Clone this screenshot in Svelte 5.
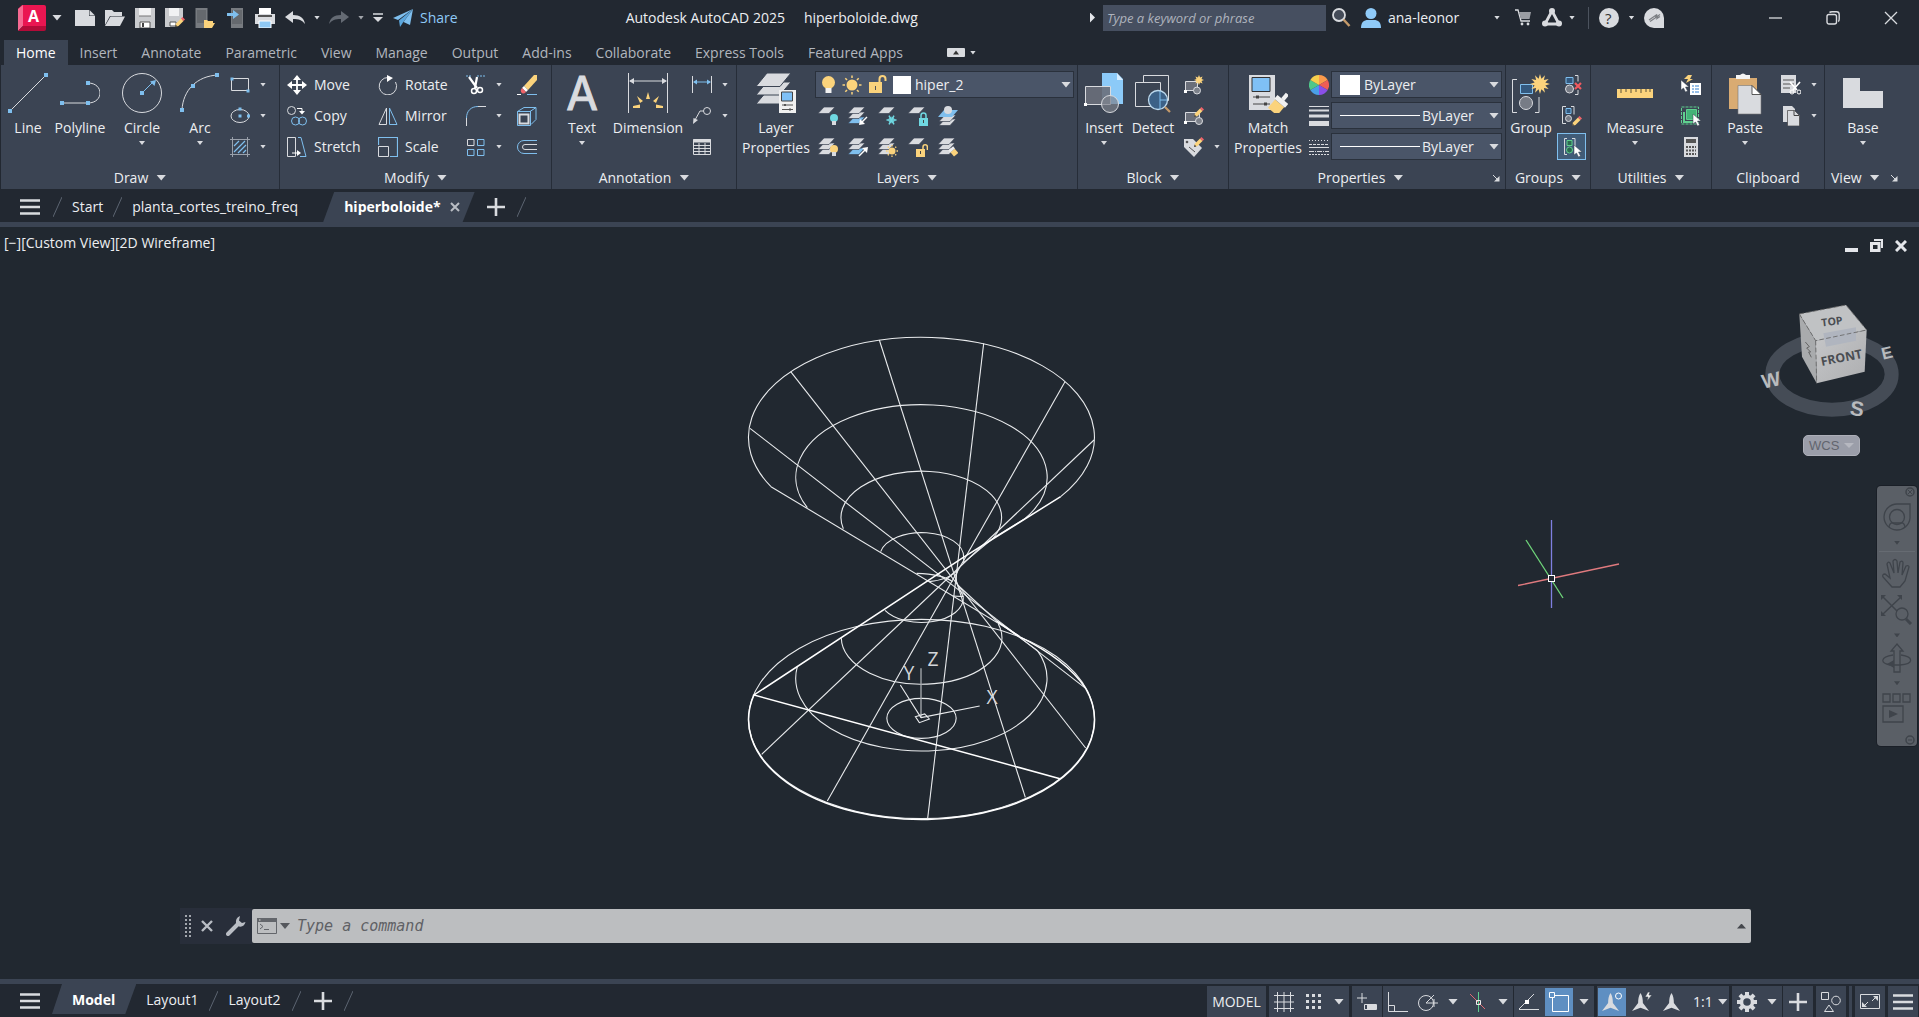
<script>
  const W = '#d9dbdf';
  const B = '#7fbfee';
  const Y = '#fbd37c';
  const S = '#3b4453';

  const svg = (w, h, body) =>
    `<svg width="${w}" height="${h}" viewBox="0 0 ${w} ${h}" fill="none" aria-hidden="true" style="display:block">${body}</svg>`;
  const dot = (x, y, s = 4) => `<rect x="${x - s / 2}" y="${y - s / 2}" width="${s}" height="${s}" fill="${B}"/>`;
  const sheet = (x, y, c = W) => `<path d="M${x + 6} ${y}h11l-6 6.500h-11z" fill="${c}" stroke="${S}" stroke-width=".7"/>`;
  const stack = (mid = W, low = W) => sheet(0, 11, low) + sheet(0, 6, mid) + sheet(0, 1);
  const pencil = (x, y) =>
    `<g transform="translate(${x} ${y})"><path d="M0 10l1-3.500 5-5 2.500 2.500-5 5z" fill="${Y}"/><path d="M6 1.500L7.500 0 10 2.500 8.500 4z" fill="#f0646a"/><path d="M0 10l.6-2.400 1.800 1.800z" fill="#3a3a3a"/></g>`;
  const bulb = (x, y, c) =>
    `<circle cx="${x}" cy="${y}" r="4" fill="${c}"/><path d="M${x - 2} ${y + 3}h4v4h-4z" fill="${W}"/>`;
  const rays = (x, y, r1, r2, n, c, w) => {
    let d = '';
    for (let i = 0; i < n; i++) {
      const a = (i * 2 * Math.PI) / n;
      d += `M${x + r1 * Math.cos(a)} ${y + r1 * Math.sin(a)}L${x + r2 * Math.cos(a)} ${y + r2 * Math.sin(a)}`;
    }
    return `<path d="${d}" stroke="${c}" stroke-width="${w}"/>`;
  };
  const star = (x, y, r, n = 10) => {
    let p = '';
    for (let i = 0; i < n * 2; i++) {
      const a = (i * Math.PI) / n - Math.PI / 2;
      const q = i % 2 ? r * 0.55 : r;
      p += `${x + q * Math.cos(a)},${y + q * Math.sin(a)} `;
    }
    return `<polygon points="${p}" fill="${Y}"/>`;
  };
  const pie = (cols) =>
    cols
      .map((c, i) => {
        const a = (i * Math.PI) / 3 - Math.PI / 2;
        const b = a + Math.PI / 3;
        return `<path d="M10 10L${10 + 10 * Math.cos(a)} ${10 + 10 * Math.sin(a)}A10 10 0 0 1 ${10 + 10 * Math.cos(b)} ${10 + 10 * Math.sin(b)}z" fill="${c}"/>`;
      })
      .join('');
  const cursor = (x, y) =>
    `<path d="M${x} ${y}v10l2.500-2 2 4 2-1-2-4h3.500z" fill="#fff" stroke="${S}" stroke-width=".5"/>`;
  const floppy = `<path d="M0 0h20v20H0z" fill="#c9cbce"/><path d="M4 0h12v8H4z" fill="#f1f2f3"/><path d="M4 8h12" stroke="#777" stroke-width="1"/><path d="M5 14h10v6H5z" fill="#fff" stroke="#555"/><path d="M7 15h2v4H7z" fill="#444"/>`;
  const bars = svg(20, 16, `<path d="M0 1.500h20M0 8h20M0 14.500h20" stroke="${W}" stroke-width="2.400"/>`);
  const plus = svg(18, 18, `<path d="M9 0v18M0 9h18" stroke="${W}" stroke-width="2.600"/>`);
  const vane = `<path d="M10 0c2 3 2.500 7 2.500 10.500L19 19l-9-3.500L1 19l6.500-8.500C7.500 7 8 3 10 0z" fill="${W}"/>`;

  const ic = {
    logo: svg(30, 26, `<path d="M4 0h22q2 0 2 2v19H0V4z" fill="#ea1651"/><path d="M0 4l5-4v21l-5 5z" fill="#f56a92"/><path d="M0 26l5-5h23v3q0 2-2 2z" fill="#b30b38"/>`),
    new: svg(20, 16, `<path d="M0 0h14v6h6v10H0z" fill="${W}"/><path d="M14.500 0L20 5.500h-5.500z" fill="${W}"/>`),
    open: svg(20, 16, `<path d="M0 0h7l2 2h8v4H5L0 15z" fill="${W}"/><path d="M5.500 6.500H20L15 16H0z" fill="${W}"/>`),
    save: svg(20, 20, floppy),
    saveas: svg(20, 20, `<path d="M0 0h18v11l-8 8H0z" fill="#c9cbce"/><path d="M4 0h10v8H4z" fill="#f1f2f3"/><path d="M5 14h6v4H5z" fill="#fff" stroke="#555"/>` + pencil(10, 9)),
    openweb: svg(20, 20, `<rect x=".5" y="0" width="12" height="20" fill="#777b80"/><path d="M2 2h9v13H2z" fill="#65696e"/><path d="M9 12h3l1 1h5v2h2l-3 5H9z" fill="${Y}"/>`),
    saveweb: svg(17, 20, `<rect x="4" y="0" width="12" height="20" fill="#777b80"/><path d="M5 2h10v14H5z" fill="#65696e"/><path d="M0 5h6V2l6 4.500L6 11V8H0z" fill="${B}"/>`),
    print: svg(20, 20, `<path d="M4 0h12v6H4z" fill="#fff"/><path d="M0 6h20v10H0z" fill="${W}"/><path d="M3 7h14v2H3z" fill="#555"/><path d="M4 13h12v7H4z" fill="#8fc9f5" stroke="#fff"/>`),
    undo: svg(20, 14, `<path d="M8 0v4c7 0 11 3 12 9-3-4-6-5-12-5v4L0 6z" fill="${W}"/>`),
    redo: svg(20, 14, `<path d="M12 0v4C5 4 1 7 0 13c3-4 6-5 12-5v4l8-6z" fill="#646a73"/>`),
    custom: svg(10, 9, `<path d="M0 1h10" stroke="${W}" stroke-width="1.500"/><path d="M0 4h10L5 9z" fill="${W}"/>`),
    send: svg(20, 18, `<path d="M20 0L0 9l5 2z" fill="${B}"/><path d="M20 0L6 11.500 7 18l3-4.500z" fill="#5ba6dd"/><path d="M20 0l-9.500 13L17 16z" fill="${B}"/>`),
    magnify: svg(19, 19, `<circle cx="7" cy="7" r="6" stroke="${W}" stroke-width="1.800" fill="#444b58"/><path d="M11.500 11.500L17.500 18" stroke="#c59a6a" stroke-width="2.500"/>`),
    user: svg(20, 20, `<circle cx="10" cy="5.500" r="5.500" fill="#8fcaf8"/><path d="M0 20c0-6 3-8 7-8h6c4 0 7 2 7 8z" fill="#8fcaf8"/>`),
    cart: svg(17, 17, `<path d="M0 1h3l3 11h9" stroke="${W}" stroke-width="1.300"/><path d="M4 3h12l-1.500 7H6z" fill="#9a9da3"/><circle cx="7" cy="15" r="1.400" fill="${W}"/><circle cx="13" cy="15" r="1.400" fill="${W}"/>`),
    apps: svg(20, 19, `<path d="M10 3L3 16h14z" stroke="${W}" stroke-width="2.800" stroke-linejoin="round"/><circle cx="10" cy="3" r="3" fill="${W}"/><circle cx="3" cy="15.500" r="3" fill="${W}"/><circle cx="17" cy="15.500" r="3" fill="${W}"/>`),
    help: svg(20, 20, `<circle cx="10" cy="10" r="10" fill="${W}"/>`),
    feedback: svg(20, 20, `<path d="M10 0a10 10 0 0 1 10 10v10H10A10 10 0 0 1 10 0z" fill="${W}"/><path d="M5 12l8-5.500-1.500 3 4.500-3M6 13.500l8-5.500-1 2.500 3-2" stroke="#7b7e83" stroke-width="1.200"/>`),
    min: svg(13, 14, `<path d="M0 7h13" stroke="${W}" stroke-width="1.300"/>`),
    restore: svg(14, 14, `<rect x="1" y="3.500" width="9.500" height="9.500" rx="2" stroke="${W}" stroke-width="1.400"/><path d="M3.500 1.500Q4 .8 6 .8h4.500q2.700 0 2.700 2.700V8q0 2-1 2.500" stroke="${W}" stroke-width="1.400"/>`),
    close: svg(14, 14, `<path d="M1 1l12 12M13 1L1 13" stroke="${W}" stroke-width="1.300"/>`),
    pill: svg(18, 9, `<rect width="18" height="9" rx="1" fill="${W}"/><path d="M6 6.500h6L9 2.500z" fill="#333"/>`),

    line: svg(40, 40, `<path d="M2 38L38 2" stroke="${W}"/>` + dot(2, 38) + dot(38, 2)),
    polyline: svg(40, 40, `<path d="M1 30h27c16 0 16-20 0-20" stroke="${W}"/>` + dot(2, 30) + dot(28, 30) + dot(28, 10)),
    circle: svg(40, 40, `<circle cx="20" cy="20" r="19.500" stroke="${W}"/><path d="M20 20l11-11" stroke="${B}"/><path d="M34 7l-1.500 6-4.500-4.500z" fill="${B}"/>` + dot(20, 20)),
    arc: svg(40, 40, `<path d="M2 37C3 17 17 3 38 2" stroke="${W}"/>` + dot(2, 37) + dot(13, 13) + dot(37, 2)),
    rect: svg(20, 20, `<path d="M1.500 3.500h17v12h-17z" stroke="${W}"/>` + dot(2, 4, 3) + dot(18, 16, 3)),
    ellipse: svg(20, 20, `<ellipse cx="10" cy="10" rx="9" ry="6.500" stroke="${W}"/>` + dot(10, 3, 3) + dot(10, 10, 3) + dot(18.5, 10, 3)),
    hatch: svg(20, 20, `<path d="M2.500 0v20M17.500 0v20M0 2.500h20M0 17.500h20" stroke="#9aa1ab"/><path d="M4 9l5-5M4 15L15 4M8 16l8-8M13 16l3-3" stroke="${B}" stroke-width="1.200"/>`),

    move: svg(20, 20, `<path d="M10 2v16M2 10h16" stroke="#fff" stroke-width="1.800"/><path d="M10 0l4 5H6zM10 20l4-5H6zM0 10l5-4v8zM20 10l-5-4v8z" fill="#fff"/>`),
    copy: svg(20, 20, `<circle cx="4.500" cy="4.500" r="4" stroke="${W}"/><path d="M10 2.500h5V6" stroke="#fff"/><path d="M12 5h6l-3 3.500z" fill="#fff"/><circle cx="8.500" cy="15" r="4" stroke="${B}"/><circle cx="15.500" cy="15" r="4" stroke="${B}"/>`),
    stretch: svg(20, 20, `<path d="M.5.5h8v19h-8z" stroke="${W}"/><path d="M11 .5h3l5 19h-6" stroke="${B}"/><path d="M5 16h6" stroke="#fff"/><path d="M10 13l4 3-4 3z" fill="#fff"/>`),
    rotate: svg(20, 20, `<path d="M17.500 7A8.700 8.700 0 1 1 10 2.500" stroke="${W}"/><path d="M9 0l6 3-6 4z" fill="#fff"/>`),
    mirror: svg(20, 20, `<path d="M8.500 2v16.500H1z" stroke="${W}"/><path d="M11.500 2v16.500H19z" stroke="${B}"/>`),
    scale: svg(20, 20, `<path d="M.5 8V.5h19v19H12" stroke="${B}" stroke-width="1.200"/><path d="M.5 9.500h10v10H.500z" stroke="${W}"/>`),
    trim: svg(20, 20, `<path d="M0 1h6M11 1h9" stroke="${B}" stroke-dasharray="2 1"/><path d="M3 2l8 11M11 2l-2 11" stroke="#fff" stroke-width="2.200"/><circle cx="8" cy="16" r="2.500" stroke="#fff" stroke-width="1.500"/><circle cx="14" cy="15" r="2.500" stroke="#fff" stroke-width="1.500"/>`),
    fillet: svg(20, 20, `<path d="M.5 20V12" stroke="${W}"/><path d="M.5 12C.5 5 5 .5 12 .5" stroke="${B}"/><path d="M12 .5h8" stroke="${W}"/>`),
    array: svg(20, 20, `<path d="M1.500 2.500h6.500v6H1.500z" stroke="${W}"/><path d="M11.500 2.500H18v6h-6.500zM1.500 12.500h6.500v6H1.500zM11.500 12.500H18v6h-6.500z" stroke="${B}"/>`),
    erase: svg(20, 20, `<path d="M20 0v5L11 15 7 11 17 0z" fill="${Y}"/><path d="M7 11l4 4-2 2-4-4z" fill="#fff"/><path d="M5 13l4 4q-3 3-5 0-1-2 1-4z" fill="#f0646a"/><path d="M0 19.500h4" stroke="#fff"/><path d="M10 19.500h10" stroke="${B}"/>`),
    explode: svg(20, 20, `<path d="M2.500 8.500h9v9h-9z" stroke="${W}" stroke-width="2"/><path d="M.5 5.500L7 1.500h12v12l-5 5M.5 5.500H13l6-4M13.500 5v14.500M.5 5.500v14h13" stroke="${B}"/>`),
    offset: svg(20, 20, `<path d="M20 3.500H7a6.500 6.500 0 0 0 0 13h13" stroke="${B}"/><path d="M20 7.500H8a2.500 2.500 0 0 0 0 5h12" stroke="${W}"/>`),

    dimension: svg(40, 40, `<path d="M.5 0v40M39.500 0v40M2 8h36" stroke="${W}"/><path d="M1 8l5-3v6zM39 8l-5-3v6z" fill="${W}"/><path d="M20 19l2 7h-4zM9 23l6 5-3 2zM31 23l-6 5 3 2zM5 33l7-1.500v3.500H5zM35 33l-7-1.500v3.500h7z" fill="${Y}"/>`),
    dimlin: svg(20, 20, `<path d="M.5 1v17M19.500 1v17" stroke="${W}"/><path d="M2 7h16" stroke="${B}"/><path d="M1 7l4-2.500v5zM19 7l-4-2.500v5z" fill="${B}"/>`),
    leader: svg(20, 20, `<circle cx="15" cy="5" r="3.500" stroke="${W}"/><path d="M11.500 5H8L3 14" stroke="${W}"/><path d="M1 18l.5-6 4.500 2z" fill="${W}"/>`),
    table: svg(20, 20, `<path d="M1.500 2.500h17v15h-17z" stroke="${W}"/><path d="M1 4h18" stroke="${W}" stroke-width="3"/><path d="M1 8.500h18M1 11.500h18M1 14.500h18M7 6v11M13 6v11" stroke="${W}"/>`),

    layerprops: svg(40, 40, `<g fill="${W}" stroke="${S}"><path d="M11 18h24L24 31H0z"/><path d="M11 9h24L24 22H0z"/><path d="M11 0h24L24 13.500H0z"/></g><path d="M23 17h17v23H23z" fill="#f0f0f0"/><path d="M25.500 19h11v9h-11z" fill="#7fc0f5" stroke="#444"/><path d="M26 32h11M26 36.500h11" stroke="#555"/><path d="M28 31h2v2h-2zM33 35.500h2v2h-2z" fill="#555"/>`),
    lbulb: svg(15, 20, `<circle cx="7.500" cy="7.500" r="6.500" fill="${Y}"/><path d="M4.500 13h6v5h-6z" fill="#f2f2f2"/>`),
    sun: svg(20, 20, `<circle cx="10" cy="10" r="5.500" fill="${Y}"/>` + rays(10, 10, 7, 9.5, 8, Y, 1.5)),
    unlock: svg(19, 19, `<path d="M1 7h13v11H1z" fill="${Y}"/><path d="M11.500 8V4a3 3 0 0 1 6 0v2" stroke="${Y}" stroke-width="2"/><path d="M7.500 11v4" stroke="#555"/>`),
    l1: svg(20, 20, sheet(0, 1) + bulb(16, 12, '#6fd8e2')),
    l2: svg(20, 20, stack(W, B) + `<path d="M19 11l-6 6" stroke="#fff" stroke-width="1.500"/><path d="M11 19l1-6 5 5z" fill="#fff"/>`),
    l3: svg(20, 20, sheet(0, 1) + rays(13.5, 14, 0, 5, 6, '#6fd8e2', 1.5) + `<circle cx="13.500" cy="14" r="2.700" stroke="#6fd8e2"/>`),
    l4: svg(20, 20, sheet(0, 1) + `<path d="M11 12h9v8h-9z" fill="#6fd8e2"/><path d="M13 12V9.500a2.500 2.500 0 0 1 5 0V12" stroke="#6fd8e2" stroke-width="1.500"/><path d="M15.500 14v3" stroke="#444"/>`),
    l5: svg(20, 20, sheet(1, 13) + sheet(1, 9) + `<path d="M6 4h14l-6 7H0z" fill="${B}"/><circle cx="10" cy="4" r="4" fill="${W}"/>`),
    l6: svg(20, 20, stack() + bulb(16, 12, Y)),
    l7: svg(20, 20, stack(W, B) + `<path d="M11 19l6-6" stroke="#fff" stroke-width="1.500"/><path d="M20 10l-1 6-5-5z" fill="#fff"/>`),
    l8: svg(20, 20, stack() + `<circle cx="14" cy="14" r="3.500" fill="${Y}"/>` + rays(14, 14, 4.5, 6, 8, Y, 1.3)),
    l9: svg(20, 20, sheet(0, 1) + `<path d="M8 12h9v8H8z" fill="${Y}"/><path d="M15 12v-2a2.200 2.200 0 0 1 4.400 0v3" stroke="${Y}" stroke-width="1.500"/><path d="M12.500 14v3" stroke="#444"/>`),
    l10: svg(20, 20, stack() + `<g transform="translate(15 14) rotate(-40) scale(.7)"><rect x="-4" y="-1" width="8" height="8" fill="${Y}"/><rect x="-4.500" y="-5" width="9" height="4" fill="#eee"/></g>`),

    insert: svg(40, 40, `<path d="M18 0h15l6 6v25H18z" fill="#8ccaf8"/><path d="M33 0l6 7h-6z" fill="#d9eeff"/><path d="M1.500 13.500h25v18h-25z" fill="#6a6f7a" fill-opacity=".9" stroke="${W}"/><circle cx="26" cy="31" r="8.500" fill="#7d828b" fill-opacity=".7" stroke="${W}"/><path d="M0 30h3v3H0z" fill="#fff"/>`),
    detect: svg(36, 40, `<path d="M8.500 9V2.500h25v25h-6M.500 9.500h25v24h-25z" stroke="${W}"/><circle cx="23" cy="27" r="9.500" fill="#3c6187" stroke="#bcd9ee" stroke-width="1.300"/><path d="M25 18v18M25 27h7" stroke="${B}"/><path d="M30 34l5 5" stroke="#c59a6a" stroke-width="2.200"/>`),
    b1: svg(20, 20, `<path d="M1.500 6.500h12v9h-12z" fill="#6a6f7a" stroke="${W}"/><circle cx="13" cy="15.500" r="3.500" fill="#7d828b" stroke="${W}"/><path d="M0 15h3v3H0z" fill="#fff"/>` + star(15, 5, 5, 8)),
    b2: svg(20, 20, `<path d="M1.500 6.500h14v9h-14z" fill="#6a6f7a" stroke="${W}"/><circle cx="15" cy="15" r="3.500" fill="#7d828b" stroke="${W}"/><path d="M0 15h3v3H0z" fill="#fff"/>` + pencil(10, 1)),
    b3: svg(20, 20, `<path d="M0 2h9l9 9-8 9L0 10z" fill="${W}"/><circle cx="3" cy="5" r="1.300" fill="#555"/><path d="M5 10l6 5" stroke="#555"/>` + pencil(10, 0)),

    match: svg(40, 40, `<path d="M1 2h26v35H1z" fill="${W}"/><path d="M4 4.500h18v14H4z" fill="#7fc0f5" stroke="#333"/><path d="M5 24h17M5 31h17" stroke="#444"/><path d="M8 22.500h3v3H8zM16 29.500h3v3h-3z" fill="#444"/><g transform="translate(31 31) rotate(40)"><path d="M-6-1H6v11H-6z" fill="${Y}"/><path d="M-7-6H7v5H-7zM-2-13h4v7h-4z" fill="#f1f1f1"/></g>`),
    wheel: svg(20, 20, pie(['#fb9a4b', '#ee5e55', '#8a4fe8', '#4a9fe8', '#4fc78a', '#f7cf4d'])),
    weights: svg(20, 20, `<path d="M0 .5h20" stroke="${W}"/><path d="M0 4.500h20" stroke="${W}" stroke-width="2"/><path d="M0 10h20" stroke="${W}" stroke-width="3"/><path d="M0 17.500h20" stroke="${W}" stroke-width="5"/>`),
    types: svg(20, 20, `<path d="M0 3.500h20" stroke="${W}" stroke-dasharray="1 2"/><path d="M0 7.500h20" stroke="${W}" stroke-dasharray="3 1"/><path d="M0 10.500h20" stroke="${W}"/><path d="M0 14.500h20" stroke="${W}" stroke-dasharray="5 1 1 1"/><path d="M0 17.500h20" stroke="${W}" stroke-dasharray="2 1"/>`),

    group: svg(40, 40, `<path d="M6 6.500H1.500v33H6M24 39.500h4V24" stroke="${W}"/><path d="M9.500 11.500h12v9h-12z" fill="#33597f" stroke="${B}"/><circle cx="15" cy="30" r="6.500" fill="#777c86" stroke="${W}"/>` + star(29, 11, 10, 12)),
    g1: svg(20, 20, `<path d="M4 2.500h7v6H4z" fill="#33597f" stroke="${B}"/><circle cx="7.500" cy="14" r="4" fill="#777c86" stroke="${W}"/><path d="M13 .5h3v6M13 19.500h3V15" stroke="${W}"/><path d="M13 8l6 6M19 8l-6 6" stroke="#f05a60" stroke-width="2.200"/>`),
    g2: svg(20, 20, `<path d="M4 .5H.5v17H4M9 .5h3v8" stroke="${W}"/><path d="M4 2.500h5v5H4z" fill="#33597f" stroke="${B}"/><circle cx="6.500" cy="12.500" r="3" fill="#777c86" stroke="${W}"/>` + pencil(10, 10)),
    g3: svg(20, 20, `<path d="M5 1.500H2.500v16H5M10 1.500h3v8" stroke="${W}"/><path d="M5 3.500h5v5H5z" fill="#2d6b52" stroke="#5fd08f"/><circle cx="7.500" cy="13" r="3" fill="#2d6b52" stroke="#5fd08f"/>` + cursor(12, 8)),

    measure: svg(40, 40, `<path d="M2 16h36v9H2z" fill="${Y}"/><path d="M6 16v4M11 16v3M16 16v4M21 16v3M26 16v4M31 16v3M35 16v3" stroke="#5b5238"/>`),
    u1: svg(20, 20, `<path d="M9 8h11v12H9z" fill="#fff"/><path d="M11 11h2M14 11h4M11 14h2M14 14h4M11 17h2M14 17h4" stroke="#2f7fd0"/><path d="M7 0h4L9 4h3L5 8l2-4H3z" fill="${Y}"/>` + cursor(0, 5)),
    u2: svg(20, 20, `<path d="M.5 1h17v17H.5z" stroke="#5fd08f" stroke-dasharray="3 1"/><path d="M5.500 3.500h10v10h-10z" fill="#43b377" stroke="#5fd08f"/><path d="M3 6v10h10" stroke="#5fd08f" stroke-width="2"/>` + cursor(12, 8)),
    u3: svg(20, 20, `<path d="M3 0h14v20H3z" fill="${W}"/><path d="M5 2h10v4H5z" fill="#555"/><path d="M5 10h10M5 13.500h10M5 17h10" stroke="#555" stroke-width="2" stroke-dasharray="2 1"/>`),

    paste: svg(34, 42, `<path d="M1 5h28v31H1z" fill="#d9ab72"/><path d="M8 2h4q3-3 6 0h4v4H8z" fill="#f4f4f4"/><path d="M10 12.500h14l9 9V41H10z" fill="${W}" stroke="#777" stroke-width=".6"/><path d="M24 12.500l9 9h-9z" fill="#fff" stroke="#333" stroke-width=".8"/>`),
    c1: svg(20, 20, `<path d="M0 0h15v18H0z" fill="${W}"/><path d="M2 5h11M2 9h11M2 13h7" stroke="#555"/><path d="M9 7l7 8M19 7l-7 8" stroke="#fff" stroke-width="1.700"/><circle cx="11" cy="17" r="2" stroke="#fff"/><circle cx="18" cy="17" r="2" stroke="#fff"/>`),
    c2: svg(20, 20, `<path d="M2 0h9l3 3v13H2z" fill="${W}"/><path d="M6.500 4.500h7l5 5V20h-12z" fill="${W}" stroke="#444" stroke-width=".7"/><path d="M13 4.500v5h5" stroke="#444"/>`),
    base: svg(40, 40, `<path d="M0 5h17v13h23v17H0z" fill="${W}"/>`),
    launch: svg(8, 8, `<path d="M1 1l5 5" stroke="${W}"/><path d="M2 7.500h5.500V2z" fill="${W}"/>`),

    grid: svg(20, 20, `<path d="M3.500 0v20M10 0v20M16.500 0v20M0 3.500h20M0 10h20M0 16.500h20" stroke="${W}"/>`),
    dots: svg(20, 20, [2, 8, 14].map((y) => [2, 8, 14].map((x) => `<rect x="${x}" y="${y}" width="3" height="3" fill="${W}"/>`).join('')).join('')),
    dyn: svg(20, 20, `<path d="M5 1v10M0 6h10" stroke="${W}"/><path d="M7.500 12.500h12v5h-12z" stroke="${W}"/><path d="M10 13h9v4h-9z" fill="${W}"/>`),
    ortho: svg(20, 20, `<path d="M.5 0v19.500H20M.5 13.500h6v6" stroke="${W}"/>`),
    polar: svg(20, 20, `<circle cx="8" cy="11" r="7.500" stroke="${W}"/><path d="M8 11h12M8 11l8-8M16 7v8" stroke="${W}"/>`),
    iso: svg(20, 20, `<path d="M2 2l15 15" stroke="#e06a72"/><path d="M10.500 0v20" stroke="#5fd08f"/><path d="M8.500 8.500h4v4h-4z" stroke="#eee"/>`),
    track: svg(20, 20, `<path d="M0 17.500h20M0 17L15 2" stroke="${W}"/><path d="M6 8h4v4H6z" fill="#fff"/>`),
    osnap: svg(20, 20, `<path d="M3.500 3.500h16v16h-16z" stroke="#fff"/><path d="M.5.5h5v5h-5z" fill="#5f8fc2" stroke="#fff"/>`),
    an1: svg(20, 20, `<g transform="translate(-1 1) scale(.95)">${vane}</g><circle cx="16.500" cy="4" r="3" stroke="#fff" fill="#5f8fc2"/>`),
    an2: svg(20, 20, `<g transform="translate(-1 1) scale(.95)">${vane}</g><path d="M16 0l-3 5h3l-1 4 5-6h-3l1-3z" fill="#eee" stroke="${S}" stroke-width=".6"/>`),
    an3: svg(20, 20, `<g transform="translate(0 1) scale(.95)">${vane}</g>`),
    gear: svg(20, 20, rays(10, 10, 5, 10, 8, W, 4) + `<circle cx="10" cy="10" r="5.500" stroke="${W}" stroke-width="3.500"/>`),
    shapes: svg(20, 20, `<path d="M.5.5h7v7h-7zM8 13l-4.500 6.500h9z" stroke="${W}"/><circle cx="15" cy="8.500" r="4.300" stroke="${W}"/>`),
    full: svg(20, 16, `<path d="M.5.5h19v14H.5z" stroke="${W}"/><path d="M12 7l4-4M8 8l-4 4" stroke="${W}"/><path d="M18 2v5l-5-5zM2 13V8l5 5z" fill="${W}"/>`),
    bars,
    plus,
    slash: svg(9, 20, `<path d="M9 0L0 20" stroke="#5c6471"/>`),
    tabx: svg(10, 10, `<path d="M1 1l8 8M9 1L1 9" stroke="#b9bdc4" stroke-width="2"/>`),
    wmin: svg(13, 13, `<path d="M0 9h13v4H0z" fill="#e4e6ea"/>`),
    wres: svg(13, 13, `<path d="M4 1h8v8" stroke="#e4e6ea" stroke-width="2"/><path d="M1.500 4.500h7.500v7H1.500z" stroke="#e4e6ea" stroke-width="3"/>`),
    wx: svg(12, 12, `<path d="M1 1l10 10M11 1L1 11" stroke="#e4e6ea" stroke-width="3"/>`),
    grip: svg(7, 22, [0, 4, 8, 12, 16, 20].map((y) => `<path d="M0 ${y + 1}h2M4 ${y + 1}h2" stroke="#a3a7ae" stroke-width="2"/>`).join('')),
    cmdx: svg(12, 12, `<path d="M1 1l10 10M11 1L1 11" stroke="#b9bdc4" stroke-width="2.400"/>`),
    wrench: svg(20, 20, `<path d="M2 18L12 8" stroke="#b9bdc4" stroke-width="4" stroke-linecap="round"/><path d="M14 0q-5 2-4 8l3 2.500q5 1 6.500-4.500L16 7l-3-2.500z" fill="#b9bdc4"/>`),
    prompt: svg(20, 16, `<path d="M.5.5h19v15H.5z" stroke="#63666b"/><path d="M0 0h20v4H0z" fill="#63666b"/><path d="M3 6l3 2.500L3 11M7 11.500h5" stroke="#63666b"/><path d="M2 2h1.500" stroke="#ddd"/>`),

    nx: svg(10, 10, `<circle cx="5" cy="5" r="4" stroke="#3f444b" stroke-width="1.500"/><path d="M3 3l4 4M7 3L3 7" stroke="#3f444b"/>`),
    nm: svg(10, 10, `<circle cx="5" cy="5" r="4" stroke="#3f444b" stroke-width="1.500"/><path d="M3 5h4" stroke="#3f444b"/>`),
    steer: svg(30, 30, `<path d="M15 1h13v14a13 13 0 1 1-13-14z" stroke="#3f444b" stroke-width="1.300"/><circle cx="15" cy="14" r="7.500" stroke="#3f444b" stroke-width="1.300"/><path d="M7 24q1-5 4-4h8q3-1 4 4" stroke="#3f444b" stroke-width="1.300"/>`),
    hand: svg(30, 32, `<path d="M10 29L1 19q-1-3 2-3l5 4L5 6q1-3 3-1l4 10-1-12q2-3 4 0l1 12 2-11q3-2 3 1l-1 12 4-9q3-1 3 1l-4 14-5 6z" stroke="#3f444b" stroke-width="1.300"/>`),
    zoom: svg(32, 30, `<path d="M2 2l16 16M20 2L2 19" stroke="#3f444b" stroke-width="1.500"/><path d="M0 0h5L0 5zM21 0v5l-5-5zM0 21v-5l5 5z" fill="#3f444b"/><circle cx="21" cy="19" r="6" stroke="#3f444b" stroke-width="1.300" fill="#5a5f66"/><path d="M25 24l5 5" stroke="#3f444b" stroke-width="3"/>`),
    orbit: svg(30, 30, `<path d="M12 29V8H9l6-7 6 7h-3v21z" stroke="#3f444b" stroke-width="1.300"/><path d="M11 12C-2 14-2 20 8 22M19 12c13 2 13 9-1 10h-7" stroke="#3f444b" stroke-width="1.300"/><path d="M5 21l7-4v8z" fill="#3f444b"/>`),
    motion: svg(30, 30, `<path d="M1 1h7v8H1zM11 1h7v8h-7zM21 1h7v8h-7zM1 13h20v16H1z" stroke="#3f444b" stroke-width="1.300"/><path d="M7 17l9 4-9 4z" fill="#3f444b"/>`)
  };

  const quick = [
    ['new', 'New'], ['open', 'Open'], ['save', 'Save'], ['saveas', 'Save As'],
    ['openweb', 'Open from Web'], ['saveweb', 'Save to Web'], ['print', 'Plot']
  ];
  const tabs = ['Home', 'Insert', 'Annotate', 'Parametric', 'View', 'Manage', 'Output', 'Add-ins', 'Collaborate', 'Express Tools', 'Featured Apps'];
  const layerTools = [['l1', 'l2', 'l3', 'l4', 'l5'], ['l6', 'l7', 'l8', 'l9', 'l10']];

  const statusGroups = [
    { items: ['grid', 'dots', '>'] },
    { items: ['dyn'] },
    { items: ['ortho', 'polar', '>', 'iso', '>'], tight: true },
    { items: ['track', '*osnap', '>'], tight: true },
    { items: ['*an1', 'an2', 'an3', '1:1'] },
    { items: ['gear', '>'] },
    { items: ['plus'], tight: true },
    { items: ['shapes'] },
    { items: [] },
    { items: ['full'] },
    { items: ['bars'] }
  ];

  const rulings = [
    [60, 325, 1067, 1105], [182, 155, 1067, 1284], [448, 60, 886, 1432],
    [761, 70, 593, 1495], [1005, 185, 292, 1443], [1092, 360, 95, 1303], [123, 500, 868, 948]
  ];
</script>

{#snippet caret(big = false)}
  <i class="caret" class:lg={big}></i>
{/snippet}

{#snippet big(icon, lines, drop = false)}
  <button class="big">
    <span class="pic">{@html ic[icon]}</span>
    {#each lines as l}<span class="lbl">{l}</span>{/each}
    {#if drop}{@render caret()}{/if}
  </button>
{/snippet}

{#snippet small(icon, label, drop = false)}
  <div class="cell">
    <button class="small" aria-label={label}>{@html ic[icon]}</button>
    {#if drop}<button class="drop" aria-label="{label} options">{@render caret()}</button>{/if}
  </div>
{/snippet}

{#snippet tool(icon, label)}
  <button class="tool">{@html ic[icon]}<span>{label}</span></button>
{/snippet}

{#snippet foot(label, launcher = false)}
  <footer>
    <button class="ttl">{label}{#if label !== 'Clipboard'}{@render caret(true)}{/if}</button>
    {#if launcher}<button class="launch" aria-label="{label} settings">{@html ic.launch}</button>{/if}
  </footer>
{/snippet}

<div class="app">
  <header class="titlebar">
    <button class="logo" aria-label="Application menu">{@html ic.logo}<b>A</b></button>
    <button class="logodrop" aria-label="Open menu">{@render caret(true)}</button>
    <div class="quick">
      {#each quick as [k, label]}
        <button class="q" aria-label={label}>{@html ic[k]}</button>
      {/each}
      <button class="q" aria-label="Undo">{@html ic.undo}</button>
      <button class="qd" aria-label="Undo list">{@render caret()}</button>
      <button class="q" aria-label="Redo">{@html ic.redo}</button>
      <button class="qd dim" aria-label="Redo list">{@render caret()}</button>
      <button class="qc" aria-label="Customize toolbar">{@html ic.custom}</button>
    </div>
    <button class="share">{@html ic.send}<span>Share</span></button>
    <h1><span>Autodesk AutoCAD 2025</span><span>hiperboloide.dwg</span></h1>
    <div class="right">
      <button class="expand" aria-label="Collapse search"><i></i></button>
      <input class="search" type="text" placeholder="Type a keyword or phrase" aria-label="Search" />
      <button class="mag" aria-label="Find">{@html ic.magnify}</button>
      <button class="user">{@html ic.user}<span>ana-leonor</span>{@render caret()}</button>
      <button class="cart" aria-label="Store">{@html ic.cart}</button>
      <button class="apps" aria-label="Apps">{@html ic.apps}{@render caret()}</button>
      <span class="vr"></span>
      <button class="help" aria-label="Help">{@html ic.help}<span>?</span></button>
      <button class="helpd" aria-label="Help menu">{@render caret()}</button>
      <button aria-label="Feedback">{@html ic.feedback}</button>
      <div class="win">
        <button aria-label="Minimize">{@html ic.min}</button>
        <button aria-label="Restore">{@html ic.restore}</button>
        <button aria-label="Close">{@html ic.close}</button>
      </div>
    </div>
  </header>

  <nav class="tabs">
    {#each tabs as t, i}
      <button class:on={i === 0}>{t}</button>
    {/each}
    <button class="pill" aria-label="Ribbon display">{@html ic.pill}{@render caret()}</button>
  </nav>

  <div class="ribbon">
    <section class="panel draw">
      <div class="body">
        {@render big('line', ['Line'])}
        {@render big('polyline', ['Polyline'])}
        {@render big('circle', ['Circle'], true)}
        {@render big('arc', ['Arc'], true)}
        <div class="rows">
          {@render small('rect', 'Rectangle', true)}
          {@render small('ellipse', 'Ellipse', true)}
          {@render small('hatch', 'Hatch', true)}
        </div>
      </div>
      {@render foot('Draw')}
    </section>

    <section class="panel modify">
      <div class="body">
        <div class="rows">
          {@render tool('move', 'Move')}
          {@render tool('copy', 'Copy')}
          {@render tool('stretch', 'Stretch')}
        </div>
        <div class="rows">
          {@render tool('rotate', 'Rotate')}
          {@render tool('mirror', 'Mirror')}
          {@render tool('scale', 'Scale')}
        </div>
        <div class="rows">
          {@render small('trim', 'Trim', true)}
          {@render small('fillet', 'Fillet', true)}
          {@render small('array', 'Array', true)}
        </div>
        <div class="rows">
          {@render small('erase', 'Erase')}
          {@render small('explode', 'Explode')}
          {@render small('offset', 'Offset')}
        </div>
      </div>
      {@render foot('Modify')}
    </section>

    <section class="panel annotation">
      <div class="body">
        <button class="big">
          <span class="pic glyph">A</span>
          <span class="lbl">Text</span>
          {@render caret()}
        </button>
        {@render big('dimension', ['Dimension'])}
        <div class="rows">
          {@render small('dimlin', 'Linear', true)}
          {@render small('leader', 'Leader', true)}
          {@render small('table', 'Table')}
        </div>
      </div>
      {@render foot('Annotation')}
    </section>

    <section class="panel layers">
      <div class="body">
        {@render big('layerprops', ['Layer', 'Properties'])}
        <div class="rows wide">
          <div class="combo layer">
            {@html ic.lbulb}{@html ic.sun}{@html ic.unlock}<span class="swatch"></span>
            <select aria-label="Layer"><option>hiper_2</option></select>
            {@render caret(true)}
          </div>
          {#each layerTools as row}
            <div class="cell lt">
              {#each row as k}<button class="small" aria-label="Layer tool">{@html ic[k]}</button>{/each}
            </div>
          {/each}
        </div>
      </div>
      {@render foot('Layers')}
    </section>

    <section class="panel block">
      <div class="body">
        {@render big('insert', ['Insert'], true)}
        {@render big('detect', ['Detect'])}
        <div class="rows">
          {@render small('b1', 'Create')}
          {@render small('b2', 'Edit')}
          {@render small('b3', 'Edit attributes', true)}
        </div>
      </div>
      {@render foot('Block')}
    </section>

    <section class="panel props">
      <div class="body">
        {@render big('match', ['Match', 'Properties'])}
        <div class="rows">
          {@render small('wheel', 'Object color')}
          {@render small('weights', 'Lineweight')}
          {@render small('types', 'Linetype')}
        </div>
        <div class="rows wide">
          <div class="combo">
            <span class="swatch lg"></span>
            <select aria-label="Color"><option>ByLayer</option></select>
            {@render caret(true)}
          </div>
          {#each ['Lineweight', 'Linetype'] as n}
            <div class="combo">
              <span class="rule"></span>
              <select aria-label={n}><option>ByLayer</option></select>
              {@render caret(true)}
            </div>
          {/each}
        </div>
      </div>
      {@render foot('Properties', true)}
    </section>

    <section class="panel groups">
      <div class="body">
        {@render big('group', ['Group'])}
        <div class="rows">
          {@render small('g1', 'Ungroup')}
          {@render small('g2', 'Group edit')}
          <div class="cell"><button class="small active" aria-label="Group selection">{@html ic.g3}</button></div>
        </div>
      </div>
      {@render foot('Groups')}
    </section>

    <section class="panel utils">
      <div class="body">
        {@render big('measure', ['Measure'], true)}
        <div class="rows">
          {@render small('u1', 'Quick select')}
          {@render small('u2', 'Select all')}
          {@render small('u3', 'Calculator')}
        </div>
      </div>
      {@render foot('Utilities')}
    </section>

    <section class="panel clip">
      <div class="body">
        {@render big('paste', ['Paste'], true)}
        <div class="rows">
          {@render small('c1', 'Cut', true)}
          {@render small('c2', 'Copy clip', true)}
        </div>
      </div>
      {@render foot('Clipboard')}
    </section>

    <section class="panel view">
      <div class="body">
        {@render big('base', ['Base'], true)}
      </div>
      {@render foot('View', true)}
    </section>
  </div>

  <div class="files">
    <button class="burger" aria-label="File tab menu">{@html bars}</button>
    {@html ic.slash}
    <button>Start</button>
    {@html ic.slash}
    <button>planta_cortes_treino_freq</button>
    <div class="current">
      <button>hiperboloide*</button>
      <button aria-label="Close drawing">{@html ic.tabx}</button>
    </div>
    <button class="add" aria-label="New drawing">{@html plus}</button>
    {@html ic.slash}
  </div>

  <main>
    <svg class="drawing" viewBox="0 227 1919 752" fill="none" aria-label="Hyperboloid wireframe">
      <g transform="translate(730 320) scale(.33333)" stroke="#e9ebed" stroke-width="3.300">
        <path d="M123 500A519 300 0 1 1 992 530" />
        <path d="M232 563A377 218 0 1 1 882 598" />
        <path d="M340 626A241 139 0 1 1 790 654" />
        <path d="M452 695A126 73 0 0 1 701 712" />
        <path d="M560 760Q635 762 668 785M597 785Q658 779 683 750Q674 775 683 795L700 830L668 828" />
        <path d="M465 871A126 73 0 0 0 700 832" />
        <path d="M334 955A241 139 0 1 0 805 912" />
        <path d="M202 1040A377 218 0 1 0 922 991" />
        <ellipse cx="574.500" cy="1197" rx="519" ry="299" />
        <ellipse cx="574.500" cy="1195" rx="104" ry="60" />
        {#each rulings as [x1, y1, x2, y2]}
          <line {x1} {y1} {x2} {y2} />
        {/each}
        <path d="M701 712V728L790 654L882 598M683 795L800 903L922 991" />
        <path
          d="M72 1125A519 299 0 1 0 1067 1105Q1010 1020 868 950L800 903M992 530L700 712L72 1125L990 1376"
          stroke="#fff"
          stroke-width="4.500"
        />
        <path d="M573 1045V1193" stroke="#a5a9ae" stroke-width="4" />
        <path d="M573 1193L749 1158M573 1193L511 1095M556 1190L584 1182L598 1197L568 1208Z" />
        <g class="axis" stroke="none" fill="#d3d6da">
          <text x="786" y="1152">X</text>
          <text x="537" y="1080">Y</text>
          <text x="609" y="1038">Z</text>
        </g>
      </g>
      <path d="M1551.500 520v88" stroke="#7f7fe0" stroke-width="1.300" />
      <path d="M1526 540L1563 598" stroke="#6fd67a" stroke-width="1.300" />
      <path d="M1518 585.500L1619 564" stroke="#e07a7e" stroke-width="1.300" />
      <rect x="1548.500" y="575.500" width="6" height="6" fill="#222831" stroke="#fff" />
    </svg>

    <button class="viewlabel">[−][Custom View][2D Wireframe]</button>
    <div class="docwin">
      <button aria-label="Minimize drawing">{@html ic.wmin}</button>
      <button aria-label="Restore drawing">{@html ic.wres}</button>
      <button aria-label="Close drawing window">{@html ic.wx}</button>
    </div>

    <svg class="cube" width="199" height="140" viewBox="0 0 597 420" aria-label="View cube">
      <defs>
        <linearGradient id="face" x1="0" y1="0" x2="1" y2="1">
          <stop offset="0" stop-color="#c6c7c9" />
          <stop offset="1" stop-color="#adaeb0" />
        </linearGradient>
      </defs>
      <ellipse cx="336" cy="283" rx="179" ry="106" fill="none" stroke="#454c56" stroke-width="42" />
      <path d="M238 102L378 75L440 150L287 182Z" fill="#c0c2c4" />
      <path d="M287 182L440 150L434 275L290 310Z" fill="url(#face)" />
      <path d="M238 102L287 182L290 310L246 230Z" fill="#a9abad" />
      <path d="M310 160L408 142V182L318 200Z" fill="#b0b5bf" />
      <path d="M238 102L287 182L440 150M287 182L290 310M238 102L378 75L440 150" fill="none" stroke="#666" stroke-width="2.500" stroke-dasharray="14 7" />
      <path d="M256 186l12 14-8 4 12 12-6 0 8 16" fill="none" stroke="#666" stroke-width="3" />
      <text class="face" x="336" y="136" font-size="32" transform="rotate(-7 336 126)">TOP</text>
      <text class="face" x="364" y="246" font-size="37" transform="rotate(-11 364 232)">FRONT</text>
      <text class="dir" x="153" y="321" font-size="60" transform="rotate(-12 153 300)">W</text>
      <text class="dir" x="501" y="236" font-size="50" transform="rotate(-14 501 219)">E</text>
      <text class="dir" x="411" y="407" font-size="62" transform="rotate(8 411 386)">S</text>
    </svg>
    <button class="wcs">WCS<i></i></button>

    <nav class="navbar" aria-label="Navigation bar">
      <button class="end" aria-label="Close bar">{@html ic.nx}</button>
      <button aria-label="Steering wheel">{@html ic.steer}{@render caret()}</button>
      <hr />
      <button aria-label="Pan">{@html ic.hand}</button>
      <button aria-label="Zoom">{@html ic.zoom}{@render caret()}</button>
      <button aria-label="Orbit">{@html ic.orbit}{@render caret()}</button>
      <button class="last" aria-label="Show motion">{@html ic.motion}</button>
      <button class="end" aria-label="Bar options">{@html ic.nm}</button>
    </nav>

    <div class="command">
      <div class="handle">
        {@html ic.grip}
        <button class="cx" aria-label="Close command line">{@html ic.cmdx}</button>
        <button aria-label="Customize command line">{@html ic.wrench}</button>
      </div>
      <div class="field">
        <button class="recent" aria-label="Recent commands">{@html ic.prompt}{@render caret(true)}</button>
        <input type="text" placeholder="Type a command" aria-label="Command" />
        <button class="history" aria-label="Command history"><i></i></button>
      </div>
    </div>
  </main>

  <div class="status">
    <button class="burger" aria-label="Layout menu">{@html bars}</button>
    <button class="model">Model</button>
    <button class="lay">Layout1</button>
    {@html ic.slash}
    <button class="lay">Layout2</button>
    {@html ic.slash}
    <button class="add" aria-label="New layout">{@html plus}</button>
    {@html ic.slash}
    <div class="sgroups">
      <div class="sg"><button class="space">MODEL</button></div>
      {#each statusGroups as g}
        <div class="sg" class:tight={g.tight} class:bar={!g.items.length}>
          {#each g.items as it}
            {#if it === '>'}
              <button class="sd" aria-label="Options">{@render caret(true)}</button>
            {:else if it === '1:1'}
              <button class="ratio">1:1{@render caret(true)}</button>
            {:else}
              {@const k = it.replace('*', '')}
              <button class="sb" aria-label={k}><span class:hot={it[0] === '*'}>{@html ic[k]}</span></button>
            {/if}
          {/each}
        </div>
      {/each}
    </div>
  </div>
</div>

<style>
  :global(body) {
    margin: 0;
    background: #222831;
  }
  .app {
    min-height: 100vh;
    display: flex;
    flex-direction: column;
    background: #222831;
    color: #eceef1;
    font: 14px/20px 'Open Sans', 'Noto Sans', sans-serif;
    overflow: hidden;
  }
  .app * {
    box-sizing: border-box;
  }
  button {
    font: inherit;
    color: inherit;
    background: none;
    border: 0;
    padding: 0;
    margin: 0;
    display: flex;
    align-items: center;
    white-space: nowrap;
    flex: none;
  }
  .caret {
    display: block;
    flex: none;
    width: 6px;
    height: 4px;
    background: #d9dbdf;
    clip-path: polygon(0 0, 100% 0, 50% 100%);
  }
  .caret.lg {
    width: 10px;
    height: 6px;
  }

  .titlebar {
    height: 40px;
    padding-bottom: 5px;
    display: flex;
    align-items: center;
    flex: none;
  }
  .logo {
    position: relative;
    margin-left: 18px;
  }
  .logo b {
    position: absolute;
    left: 10px;
    top: 1px;
    font-size: 16px;
    color: #fff;
  }
  .logodrop {
    width: 27px;
    padding-left: 4px;
  }
  .quick {
    display: flex;
    align-items: center;
    gap: 10px;
  }
  .q {
    width: 20px;
    justify-content: center;
  }
  .qd {
    width: 6px;
    margin: 0 -1px;
  }
  .dim {
    opacity: 0.7;
  }
  .share {
    margin-left: 10px;
    gap: 7px;
    color: #8fcaf8;
  }
  h1 {
    margin: 0 0 0 168px;
    display: flex;
    gap: 19px;
    font: inherit;
    white-space: nowrap;
  }
  .right {
    margin-left: auto;
    display: flex;
    align-items: center;
  }
  .expand i {
    width: 5px;
    height: 10px;
    background: #e4e6ea;
    clip-path: polygon(0 0, 100% 50%, 0 100%);
  }
  .search {
    width: 223px;
    height: 26px;
    margin: 0 6px 0 8px;
    padding: 0 4px;
    border: 0;
    background: #464f60;
    color: #fff;
    font: italic 13px/20px 'Open Sans', sans-serif;
  }
  .search::placeholder {
    color: #aeb3bd;
    opacity: 1;
  }
  .mag {
    width: 29px;
  }
  .user {
    width: 154px;
    gap: 7px;
  }
  .user span {
    flex: 1;
    text-align: left;
  }
  .user .caret {
    margin-right: 15px;
  }
  .cart {
    width: 27px;
  }
  .apps {
    gap: 7px;
  }
  .vr {
    width: 1px;
    height: 22px;
    margin: 0 10px 0 13px;
    background: #4c535e;
  }
  .help {
    position: relative;
  }
  .help span {
    position: absolute;
    left: 6px;
    top: 0;
    color: #333;
    font-size: 15px;
  }
  .helpd {
    width: 25px;
    justify-content: center;
  }
  .win {
    display: flex;
    gap: 44px;
    margin: 0 21px 0 105px;
  }

  .tabs {
    height: 25px;
    display: flex;
    padding-left: 4px;
    color: #b1b6be;
    flex: none;
  }
  .tabs button {
    padding: 0 12px;
  }
  .tabs .on {
    background: #3b4453;
    color: #fff;
  }
  .tabs .pill {
    margin-left: 20px;
    gap: 5px;
  }

  .ribbon {
    display: flex;
    min-height: 124px;
    margin-left: 1px;
    background: #3b4453;
    flex: none;
  }
  .panel {
    display: flex;
    flex-direction: column;
    border-right: 1px solid #262d38;
    flex: none;
  }
  .body {
    display: flex;
    height: 97px;
    padding-top: 4px;
  }
  footer {
    display: flex;
    align-items: center;
    height: 27px;
    padding-top: 4px;
  }
  .ttl {
    gap: 8px;
    margin: 0 auto;
  }
  .launch {
    margin-right: 5px;
  }
  .big {
    flex-direction: column;
    padding-top: 4px;
  }
  .pic {
    height: 40px;
    margin-bottom: 5px;
    display: flex;
    align-items: flex-start;
  }
  .glyph {
    font: 46px/40px Inter, 'Open Sans', sans-serif;
    color: #d9dbdf;
    -webkit-text-stroke: 1px #d9dbdf;
  }
  .big .caret {
    margin-top: 3px;
  }
  .rows {
    display: grid;
    grid-template-rows: repeat(3, 31px);
    align-items: center;
    align-content: start;
  }
  .wide {
    flex: 1;
    min-width: 0;
  }
  .cell {
    display: flex;
    align-items: center;
  }
  .small {
    width: 20px;
    justify-content: center;
  }
  .drop {
    width: 26px;
    height: 20px;
    justify-content: center;
  }
  .tool {
    gap: 7px;
  }
  .draw {
    width: 279px;
  }
  .draw .body {
    padding-left: 3px;
  }
  .draw .big:nth-child(1),
  .draw .big:nth-child(4) {
    width: 48px;
  }
  .draw .big:nth-child(2) {
    width: 56px;
  }
  .draw .big:nth-child(3) {
    width: 68px;
  }
  .draw .rows {
    margin-left: 6px;
  }
  .modify {
    width: 272px;
  }
  .modify .rows:nth-child(1) {
    margin-left: 7px;
    width: 91px;
  }
  .modify .rows:nth-child(2) {
    width: 88px;
  }
  .modify .rows:nth-child(3) {
    width: 51px;
  }
  .annotation {
    width: 185px;
  }
  .annotation .big:nth-child(1) {
    width: 60px;
  }
  .annotation .big:nth-child(2) {
    width: 72px;
  }
  .annotation .rows {
    margin-left: 8px;
  }
  .layers {
    width: 341px;
  }
  .layers .big,
  .props .big {
    width: 78px;
  }
  .layers .wide,
  .props .wide {
    margin-right: 3px;
  }
  .lt {
    gap: 10px;
    padding-left: 3px;
  }
  .block {
    width: 151px;
  }
  .block .big:nth-child(1) {
    width: 52px;
  }
  .block .big:nth-child(2) {
    width: 46px;
  }
  .block .rows {
    margin-left: 8px;
  }
  .props {
    width: 277px;
  }
  .props .rows {
    margin-left: 2px;
  }
  .combo {
    display: flex;
    align-items: center;
    height: 27px;
    padding: 0 2px 0 8px;
    background: #4a5568;
    border: 1px solid #2a313c;
  }
  .layer {
    gap: 6px;
    padding-left: 5px;
  }
  .layer select {
    margin-left: -2px;
  }
  .swatch {
    width: 18px;
    height: 18px;
    background: #fff;
    flex: none;
  }
  .swatch.lg {
    width: 20px;
    height: 20px;
    margin-right: 4px;
  }
  .rule {
    width: 80px;
    height: 1px;
    margin-right: 2px;
    background: #fff;
    flex: none;
  }
  select {
    appearance: none;
    flex: 1;
    min-width: 0;
    padding: 0;
    border: 0;
    background: none;
    color: inherit;
    font: inherit;
  }
  .groups {
    width: 85px;
  }
  .groups .big {
    width: 50px;
  }
  .groups .rows {
    margin-left: 1px;
    justify-items: center;
  }
  .active {
    width: 29px;
    height: 27px;
    border: 1px solid #7fbfee;
    background: #415c78;
  }
  .utils {
    width: 121px;
  }
  .utils .big {
    width: 88px;
  }
  .utils .rows {
    margin-left: 2px;
  }
  .clip {
    width: 113px;
  }
  .clip .big {
    width: 66px;
  }
  .clip .rows {
    margin-left: 3px;
  }
  .view {
    flex: 1;
    border: 0;
  }
  .view .big {
    width: 76px;
  }
  .view .ttl {
    margin: 0 10px 0 6px;
  }

  .files,
  .status {
    display: flex;
    align-items: center;
    height: 38px;
    border-bottom: 5px solid #3b4453;
    flex: none;
  }
  .files {
    padding-top: 3px;
    gap: 10px;
  }
  .burger {
    margin-left: 20px;
  }
  .files .burger {
    margin-right: 3px;
  }
  .current {
    display: flex;
    align-items: center;
    gap: 9px;
    height: 30px;
    margin-left: 15px;
    padding: 0 15px 0 21px;
    background: #3b4453;
    color: #fff;
    font-weight: 700;
    clip-path: polygon(11px 0, 100% 0, calc(100% - 12px) 100%, 0 100%);
  }
  .files .add {
    margin: 0 2px;
  }

  main {
    position: relative;
    flex: 1;
    min-height: 600px;
    background: #212830;
  }
  .drawing {
    position: absolute;
    inset: 0;
    width: 100%;
    height: 100%;
  }
  .axis {
    font: 400 58px 'Open Sans', sans-serif;
    text-anchor: middle;
  }
  .viewlabel {
    position: absolute;
    left: 4px;
    top: 6px;
  }
  .docwin {
    position: absolute;
    right: 12px;
    top: 12px;
    display: flex;
    align-items: center;
    gap: 12px;
  }
  .cube {
    position: absolute;
    right: 0;
    top: 53px;
  }
  .face {
    font-family: 'Open Sans', sans-serif;
    font-weight: 700;
    fill: #4a4d52;
    text-anchor: middle;
  }
  .dir {
    font-family: 'Liberation Sans', sans-serif;
    font-weight: 700;
    fill: #b9bbbe;
    text-anchor: middle;
  }
  .wcs {
    position: absolute;
    right: 59px;
    top: 208px;
    width: 57px;
    height: 21px;
    padding: 0 5px;
    justify-content: space-between;
    border: 1px solid #adafb8;
    border-radius: 5px;
    background: #9b9ea9;
    color: #62656e;
    font: 13px/18px 'Liberation Sans', sans-serif;
  }
  .wcs i {
    width: 10px;
    height: 5px;
    background: #b6b8c0;
    clip-path: polygon(0 0, 100% 0, 50% 100%);
  }
  .navbar {
    position: absolute;
    right: 2px;
    top: 259px;
    width: 40px;
    height: 260px;
    padding: 1px 2px;
    display: flex;
    flex-direction: column;
    align-items: center;
    justify-content: space-between;
    border-radius: 4px;
    background: #5a5f66;
    box-shadow: 0 0 0 1px #1a1f27;
  }
  .navbar button {
    flex-direction: column;
    gap: 8px;
  }
  .navbar .caret {
    background: #3f444b;
  }
  .navbar .end {
    align-self: flex-end;
  }
  .navbar .last {
    margin: 2px 0 6px;
  }
  hr {
    width: 36px;
    margin: 0;
    border: 0;
    border-top: 1px solid #666b72;
  }

  .command {
    position: absolute;
    left: 180px;
    right: 168px;
    bottom: 35px;
    height: 36px;
    display: flex;
    align-items: center;
  }
  .handle {
    display: flex;
    align-items: center;
    width: 72px;
    height: 36px;
    padding: 0 6px 0 5px;
    justify-content: space-between;
    background: #282e3a;
  }
  .cx {
    margin-right: 4px;
  }
  .field {
    flex: 1;
    display: flex;
    align-items: center;
    height: 34px;
    padding: 0 5px;
    border-radius: 2px;
    background: #bcbec0;
  }
  .recent {
    gap: 3px;
    margin-right: 7px;
  }
  .recent .caret {
    background: #55585d;
  }
  .field input {
    flex: 1;
    min-width: 0;
    padding: 0;
    border: 0;
    background: none;
    color: #222;
    font: italic 15px/20px 'DejaVu Sans Mono', monospace;
  }
  .field input::placeholder {
    color: #5f6165;
    opacity: 1;
  }
  .history i {
    width: 9px;
    height: 5px;
    background: #44474c;
    clip-path: polygon(50% 0, 100% 100%, 0 100%);
  }

  .status {
    border-bottom: 0;
    border-top: 5px solid #3b4453;
  }
  .model {
    align-self: flex-start;
    height: 30px;
    margin-left: 12px;
    padding: 2px 21px 0 20px;
    background: #3b4453;
    color: #fff;
    font-weight: 700;
    clip-path: polygon(10px 0, 100% 0, calc(100% - 11px) 100%, 0 100%);
  }
  .lay {
    margin: 0 11px 0 10px;
    padding-bottom: 2px;
  }
  .status .add {
    margin: 0 12px 0 13px;
  }
  .sgroups {
    margin-left: auto;
    align-self: stretch;
    display: flex;
    gap: 3px;
    padding: 2px 1px 0 0;
  }
  .sg {
    display: flex;
    align-items: center;
    background: #3b4453;
  }
  .sg.tight {
    margin-left: -2px;
  }
  .sg.bar {
    width: 3px;
  }
  .space {
    width: 59px;
    justify-content: center;
  }
  .sb {
    width: 30px;
    justify-content: center;
  }
  .sb span {
    display: flex;
    align-items: center;
    justify-content: center;
    width: 28px;
    height: 28px;
  }
  .hot {
    background: #5f8fc2;
  }
  .sd {
    width: 20px;
    height: 20px;
    justify-content: center;
  }
  .ratio {
    width: 42px;
    gap: 5px;
    padding-left: 6px;
  }
</style>
